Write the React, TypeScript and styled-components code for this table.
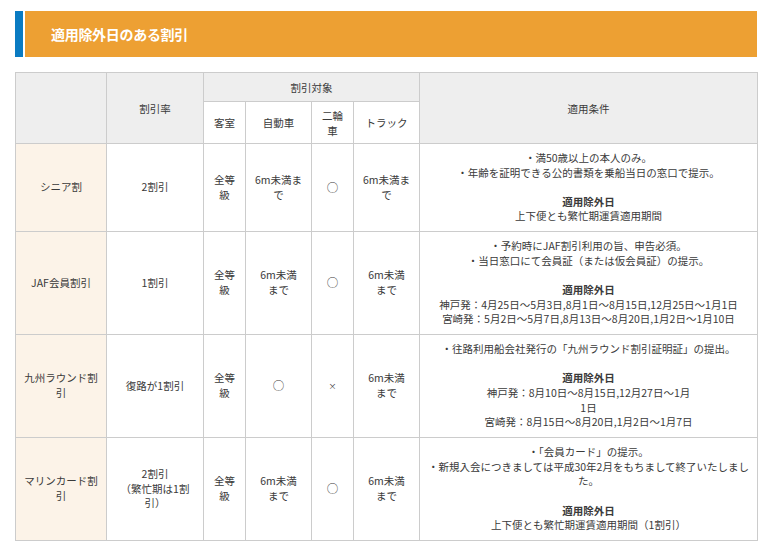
import React from "react";
import styled, { createGlobalStyle } from "styled-components";

const GlobalStyle = createGlobalStyle`
  body {
    margin: 0;
    background: #fff;
    font-family: "Noto Sans CJK JP", "Noto Sans", sans-serif;
    color: #333;
  }
`;

const Mark = styled.span`
  font-size: 11.5px;
`;

const Cross = styled.span`
  font-size: 8px;
`;

type Row = {
  name: React.ReactNode;
  rate: React.ReactNode;
  cabin: React.ReactNode;
  car: React.ReactNode;
  bike: React.ReactNode;
  truck: React.ReactNode;
  notes: React.ReactNode[];
  excluded: React.ReactNode[];
  height: number;
};

const circle = <Mark>○</Mark>;

const rows: Row[] = [
  {
    name: "シニア割",
    rate: "2割引",
    cabin: <>全等<br />級</>,
    car: <>6m未満ま<br />で</>,
    bike: circle,
    truck: <>6m未満ま<br />で</>,
    notes: ["・満50歳以上の本人のみ。", "・年齢を証明できる公的書類を乗船当日の窓口で提示。"],
    excluded: ["上下便とも繁忙期運賃適用期間"],
    height: 88,
  },
  {
    name: "JAF会員割引",
    rate: "1割引",
    cabin: <>全等<br />級</>,
    car: <>6m未満<br />まで</>,
    bike: circle,
    truck: <>6m未満<br />まで</>,
    notes: ["・予約時にJAF割引利用の旨、申告必須。", "・当日窓口にて会員証（または仮会員証）の提示。"],
    excluded: [
      "神戸発：4月25日～5月3日,8月1日～8月15日,12月25日～1月1日",
      "宮崎発：5月2日～5月7日,8月13日～8月20日,1月2日～1月10日",
    ],
    height: 103,
  },
  {
    name: <>九州ラウンド割<br />引</>,
    rate: "復路が1割引",
    cabin: <>全等<br />級</>,
    car: circle,
    bike: <Cross>×</Cross>,
    truck: <>6m未満<br />まで</>,
    notes: ["・往路利用船会社発行の「九州ラウンド割引証明証」の提出。"],
    excluded: [
      "神戸発：8月10日～8月15日,12月27日～1月",
      "1日",
      "宮崎発：8月15日～8月20日,1月2日～1月7日",
    ],
    height: 103,
  },
  {
    name: <>マリンカード割<br />引</>,
    rate: <>2割引<br />（繁忙期は1割<br />引）</>,
    cabin: <>全等<br />級</>,
    car: <>6m未満<br />まで</>,
    bike: circle,
    truck: <>6m未満<br />まで</>,
    notes: [
      "・「会員カード」の提示。",
      "・新規入会につきましては平成30年2月をもちまして終了いたしまし",
      "た。",
    ],
    excluded: ["上下便とも繁忙期運賃適用期間（1割引）"],
    height: 103,
  },
];

export default function App() {
  return (
    <Page>
      <GlobalStyle />
      <Banner>
        <BannerAccent />
        <BannerTitle>適用除外日のある割引</BannerTitle>
      </Banner>
      <Table>
        <colgroup>
          <col style={{ width: 91 }} />
          <col style={{ width: 97 }} />
          <col style={{ width: 42 }} />
          <col style={{ width: 66 }} />
          <col style={{ width: 42 }} />
          <col style={{ width: 66 }} />
          <col style={{ width: 338 }} />
        </colgroup>
        <thead>
          <HeadRow $h={29}>
            <HeadCell rowSpan={2} />
            <HeadCell rowSpan={2}>割引率</HeadCell>
            <HeadCell colSpan={4}>割引対象</HeadCell>
            <HeadCell rowSpan={2}>適用条件</HeadCell>
          </HeadRow>
          <HeadRow $h={42}>
            <SubHeadCell>客室</SubHeadCell>
            <SubHeadCell>自動車</SubHeadCell>
            <SubHeadCell>二輪<br />車</SubHeadCell>
            <SubHeadCell>トラック</SubHeadCell>
          </HeadRow>
        </thead>
        <tbody>
          {rows.map((r, i) => (
            <BodyRow key={i} $h={r.height}>
              <NameCell>{r.name}</NameCell>
              <Cell>{r.rate}</Cell>
              <Cell>{r.cabin}</Cell>
              <Cell>{r.car}</Cell>
              <Cell>{r.bike}</Cell>
              <Cell>{r.truck}</Cell>
              <ConditionCell>
                {r.notes.map((n, j) => (
                  <Line key={j}>{n}</Line>
                ))}
                <Line>&nbsp;</Line>
                <Line $bold>適用除外日</Line>
                {r.excluded.map((n, j) => (
                  <Line key={j}>{n}</Line>
                ))}
              </ConditionCell>
            </BodyRow>
          ))}
        </tbody>
      </Table>
    </Page>
  );
}

const Page = styled.div`
  padding: 11px 18px 20px 15px;
  width: 742px;
`;

const Banner = styled.div`
  display: flex;
  height: 46px;
  gap: 2px;
  margin-bottom: 15px;
`;

const BannerAccent = styled.div`
  width: 8px;
  background: #0a7bc2;
`;

const BannerTitle = styled.h2`
  flex: 1;
  margin: 0;
  display: flex;
  align-items: center;
  padding-left: 26px;
  background: #eda033;
  color: #fff;
  font-size: 14px;
  font-weight: bold;
  letter-spacing: -0.3px;
`;

const Table = styled.table`
  border-collapse: collapse;
  table-layout: fixed;
  width: 743px;
  font-size: 10.5px;
  line-height: 14.6px;
  color: #3a3a3a;
`;

const HeadRow = styled.tr<{ $h: number }>`
  height: ${(p) => p.$h}px;
`;

const BodyRow = styled.tr<{ $h: number }>`
  height: ${(p) => p.$h}px;
`;

const HeadCell = styled.th`
  border: 1px solid #cccccc;
  background: #eeeeee;
  font-weight: normal;
  text-align: center;
  vertical-align: middle;
  padding: 4px 4px;
  line-height: 15px;
`;

const SubHeadCell = styled(HeadCell)`
  background: #fff;
`;

const Cell = styled.td`
  border: 1px solid #cccccc;
  text-align: center;
  vertical-align: middle;
  padding: 5px 4px;
  white-space: nowrap;
`;

const NameCell = styled(Cell)`
  background: #fcf3e8;
`;

const ConditionCell = styled(Cell)`
  padding: 5px 6px;
`;

const Line = styled.div<{ $bold?: boolean }>`
  font-weight: ${(p) => (p.$bold ? "bold" : "normal")};
  white-space: nowrap;
`;
